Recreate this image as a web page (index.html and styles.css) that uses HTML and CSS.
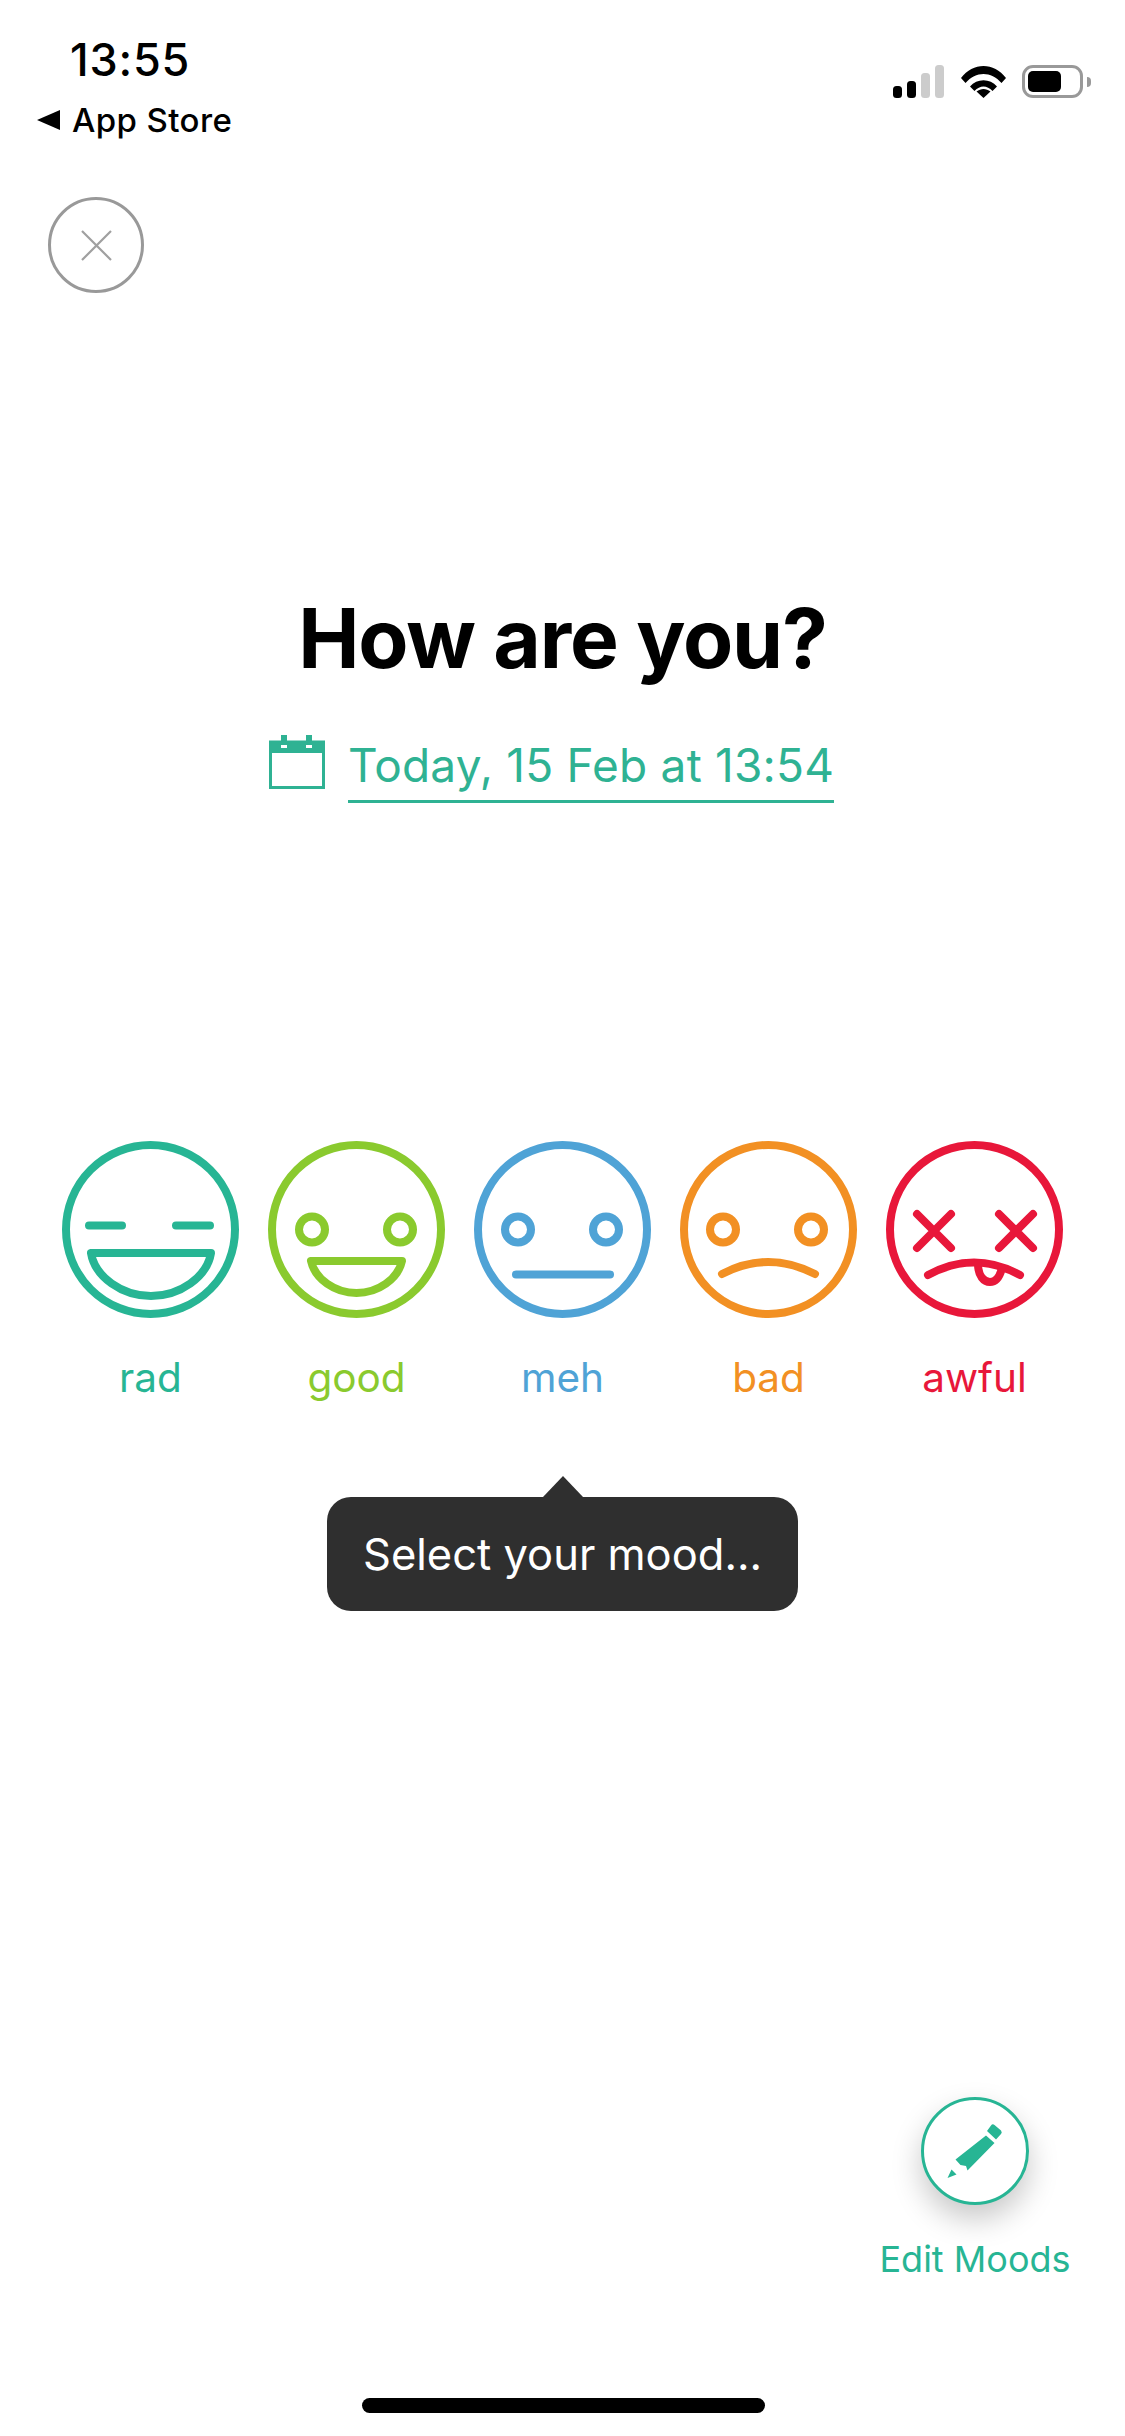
FILE: index.html
```html
<!DOCTYPE html>
<html lang="en">
<head>
    <meta charset="UTF-8">
    <title>How are you?</title>
    <link rel="stylesheet" href="styles.css">
</head>
<body>
<div class="moodPage">
    <div class="statusBar">
        <div class="statusLeft">
            <div class="statusTime">13:55</div>
            <div class="statusBack"><span class="backArrow"></span>App Store</div>
        </div>
        <div class="statusIcons">
            <svg class="signalIcon" width="52" height="33" viewBox="0 0 52 33">
                <rect x="0" y="21" width="9" height="12" rx="3.5" fill="#000"/>
                <rect x="14" y="16" width="9" height="17" rx="3.5" fill="#000"/>
                <rect x="28" y="8" width="9" height="25" rx="3.5" fill="#ccc"/>
                <rect x="42" y="0" width="9" height="33" rx="3.5" fill="#ccc"/>
            </svg>
            <svg class="wifiIcon" width="45" height="33" viewBox="0 0 45 33">
                <path d="M0 13 C12 -3 33 -3 45 13 L40.500 18 C30 6 15 6 4.500 18 Z" fill="#000"/>
                <path d="M9 21.500 C16 13 29 13 36 21.500 L31.500 26 C26 20 19 20 13.500 26 Z" fill="#000"/>
                <path d="M15.500 26.500 C20 23 25 23 29.500 26.500 L22.500 33 Z" fill="#000"/>
            </svg>
            <div class="battery">
                <div class="batteryLevel"></div>
            </div>
            <div class="batteryTip"></div>
        </div>
    </div>

    <div class="closeBtn">
        <svg width="31" height="31" viewBox="0 0 31 31">
            <path d="M1 1 L30 30 M30 1 L1 30" stroke="#a0a0a0" stroke-width="2.200" fill="none"/>
        </svg>
    </div>

    <h1 class="moodTitle">How are you?</h1>

    <div class="dateRow">
        <svg class="calIcon" width="56" height="54" viewBox="0 0 56 54">
            <path d="M1.500 7 H54.500 V52.500 H1.500 Z" fill="#fff" stroke="#2fb293" stroke-width="3"/>
            <path d="M0 6 H12 V0 H18 V6 H37 V0 H43 V6 H56 V18 H0 Z" fill="#2fb293"/>
            <rect x="12" y="10" width="6" height="3" fill="#fff"/>
            <rect x="37" y="10" width="6" height="3" fill="#fff"/>
        </svg>
        <div class="dateText">Today, 15 Feb at 13:54</div>
    </div>

    <div class="moodRow">
        <div class="moodItem moodRad">
            <svg class="face" viewBox="0 0 177 177">
                <circle cx="88.500" cy="88.500" r="84.500"/>
                <path d="M27 84.500 H60 M114 84.500 H148"/>
                <path d="M29 112 H149 C145 136 118 155 89 155 C60 155 33 136 29 112 Z"/>
            </svg>
            <span class="moodName">rad</span>
        </div>
        <div class="moodItem moodGood">
            <svg class="face" viewBox="0 0 177 177">
                <circle cx="88.500" cy="88.500" r="84.500"/>
                <circle cx="44" cy="88.500" r="13"/>
                <circle cx="132" cy="88.500" r="13"/>
                <path d="M43 120 H134 C130 138 110 152 88.500 152 C67 152 47 138 43 120 Z"/>
            </svg>
            <span class="moodName">good</span>
        </div>
        <div class="moodItem moodMeh">
            <svg class="face" viewBox="0 0 177 177">
                <circle cx="88.500" cy="88.500" r="84.500"/>
                <circle cx="44" cy="88.500" r="13"/>
                <circle cx="132" cy="88.500" r="13"/>
                <path d="M42 133.500 H136"/>
            </svg>
            <span class="moodName">meh</span>
        </div>
        <div class="moodItem moodBad">
            <svg class="face" viewBox="0 0 177 177">
                <circle cx="88.500" cy="88.500" r="84.500"/>
                <circle cx="43" cy="88.500" r="13"/>
                <circle cx="131" cy="88.500" r="13"/>
                <path d="M42 133 Q88 109 135 133"/>
            </svg>
            <span class="moodName">bad</span>
        </div>
        <div class="moodItem moodAwful">
            <svg class="face" viewBox="0 0 177 177">
                <circle cx="88.500" cy="88.500" r="84.500"/>
                <path d="M31 73 L65 107 M65 73 L31 107 M113 73 L147 107 M147 73 L113 107"/>
                <path d="M42 134 Q88 109 134 134"/>
                <path d="M92 123 C92 135 98 141 104 141 C110 141 114 135 116 127"/>
            </svg>
            <span class="moodName">awful</span>
        </div>
    </div>

    <div class="moodTip">Select your mood...</div>

    <div class="editMoods">
        <div class="editBtn">
            <svg width="108" height="108" viewBox="0 0 108 108">
                <path d="M65 38.500 L73.500 46 L46.500 73.500 L45 69 L39.500 68 L34.500 62.500 Z" fill="#27b594"/>
                <path d="M26.500 81 L30.500 72.500 L35.500 77.500 Z" fill="#27b594"/>
                <path d="M66 34 L70 28.500 Q71.500 26.500 73.500 28 L80 33.500 Q81.500 35.500 80 37 L75 42.500 Z" fill="#27b594"/>
            </svg>
        </div>
        <div class="editName">Edit Moods</div>
    </div>

    <div class="homeBar"></div>
</div>
</body>
</html>
```

FILE: styles.css
```css
body,html,h1,div{
    padding: 0;
    margin: 0;
}
body,html{
    width: 1125px;
    height: 2436px;
    overflow: hidden;
    background: #fff;
}
.moodPage{
    display: flex;
    flex-direction: column;
    width: 1125px;
    height: 2436px;
    font-family: Inter, "Liberation Sans", sans-serif;
    color: #000;
}
.statusBar{
    display: flex;
    justify-content: space-between;
    height: 102px;
    padding-top: 38px;
}
.statusLeft{
    padding-left: 37px;
}
.statusTime{
    padding-left: 33px;
    font-size: 45px;
    line-height: 44px;
    font-weight: 500;
    letter-spacing: 0.8px;
}
.statusBack{
    display: flex;
    align-items: center;
    margin-top: 18px;
    font-size: 33px;
    line-height: 40px;
    font-weight: 500;
    letter-spacing: 0.4px;
}
.backArrow{
    width: 0;
    height: 0;
    margin-right: 12px;
    border-top: 10px solid transparent;
    border-bottom: 10px solid transparent;
    border-right: 23px solid #000;
}
.statusIcons{
    display: flex;
    align-items: flex-start;
    height: 33px;
    padding: 27px 34px 0 0;
}
.wifiIcon{
    margin-left: 16px;
}
.battery{
    box-sizing: border-box;
    width: 61px;
    height: 33px;
    margin-left: 16px;
    padding: 3px;
    border: 3px solid #999;
    border-radius: 11px;
}
.batteryLevel{
    width: 33px;
    height: 21px;
    border-radius: 5px;
    background: #000;
}
.batteryTip{
    width: 4px;
    height: 10px;
    margin: 12px 0 0 4px;
    border-radius: 0 4px 4px 0;
    background: #999;
}
.closeBtn{
    box-sizing: border-box;
    display: flex;
    align-items: center;
    justify-content: center;
    width: 96px;
    height: 96px;
    margin: 57px 0 0 48px;
    border: 3px solid #999;
    border-radius: 50%;
}
.moodTitle{
    margin-top: 296px;
    font-size: 82px;
    line-height: 100px;
    font-weight: 700;
    letter-spacing: -1.1px;
    text-align: center;
}
.dateRow{
    display: flex;
    justify-content: center;
    margin-top: 46px;
    padding-right: 22px;
}
.calIcon{
    margin-right: 23px;
}
.dateText{
    padding-bottom: 5px;
    border-bottom: 3px solid #2fb293;
    font-size: 46px;
    line-height: 60px;
    letter-spacing: 0.2px;
    color: #2fb293;
    white-space: nowrap;
}
.moodRow{
    display: flex;
    justify-content: center;
    margin-top: 338px;
}
.moodItem{
    display: flex;
    flex-direction: column;
    align-items: center;
    width: 206px;
}
.face{
    width: 177px;
    height: 177px;
    fill: none;
    stroke: currentColor;
    stroke-width: 8;
    stroke-linecap: round;
    stroke-linejoin: round;
}
.moodName{
    margin-top: 35px;
    font-size: 40.5px;
    line-height: 50px;
}
.moodRad{
    color: #27b594;
}
.moodGood{
    color: #8aca2e;
}
.moodMeh{
    color: #4fa3d6;
}
.moodBad{
    color: #f29023;
}
.moodAwful{
    color: #e8173a;
}
.moodTip{
    position: relative;
    align-self: center;
    box-sizing: border-box;
    width: 471px;
    height: 114px;
    margin-top: 94px;
    border-radius: 24px;
    background: #2f2f2f;
    color: #fff;
    font-size: 43.5px;
    line-height: 114px;
    text-align: center;
}
.moodTip::before{
    content: "";
    position: absolute;
    top: -21px;
    left: 50%;
    margin-left: -20px;
    border-left: 20px solid transparent;
    border-right: 20px solid transparent;
    border-bottom: 21px solid #2f2f2f;
}
.editMoods{
    display: flex;
    flex-direction: column;
    align-items: center;
    align-self: flex-end;
    width: 206px;
    margin: 486px 47px 0 0;
}
.editBtn{
    box-sizing: border-box;
    width: 108px;
    height: 108px;
    border: 3px solid #27b594;
    border-radius: 50%;
    background: #fff;
    box-shadow: 0 14px 30px rgba(0,0,0,0.22);
}
.editBtn svg{
    display: block;
    margin: -3px;
}
.editName{
    margin-top: 32px;
    font-size: 36px;
    line-height: 44px;
    color: #27b594;
    white-space: nowrap;
}
.homeBar{
    align-self: center;
    width: 403px;
    height: 15px;
    margin-top: 117px;
    margin-left: 2px;
    border-radius: 8px;
    background: #000;
}
```
